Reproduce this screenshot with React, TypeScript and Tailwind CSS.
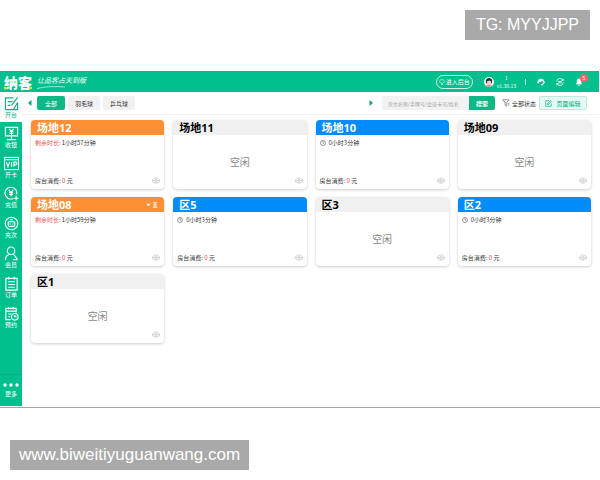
import React from 'react';
import clsx from 'clsx';

type Room = {
  name: string;
  status: 'timing' | 'open' | 'free';
  time?: string;
  tagged?: boolean;
};

const rooms: Room[] = [
  { name: '场地12', status: 'timing', time: '1小时57分钟' },
  { name: '场地11', status: 'free' },
  { name: '场地10', status: 'open', time: '0小时3分钟' },
  { name: '场地09', status: 'free' },
  { name: '场地08', status: 'timing', time: '1小时59分钟', tagged: true },
  { name: '区5', status: 'open', time: '0小时3分钟' },
  { name: '区3', status: 'free' },
  { name: '区2', status: 'open', time: '0小时3分钟' },
  { name: '区1', status: 'free' },
];

const headStyles = {
  timing: 'bg-[#fd8f35] text-white',
  open: 'bg-[#008dfb] text-white',
  free: 'bg-[#f0f0f0] text-black',
};

// Sidebar entries, icons are drawn on a 16x16 grid
const menu = [
  {
    label: '开台',
    icon: <path d="M10 2H1.5v12.5h8M4 6h5M4 10h3M14.5 1.500 8 10M14.5 7v7.500H10l4.500-7.500" />,
  },
  {
    label: '收银',
    icon: <path d="M1.500 1.500h13v9h-13zM8 10.500v3M3 14.500h10M5.500 3 8 5.500 10.500 3M8 5.500V9.500M6 5.800h4M6 7.800h4" />,
  },
  {
    label: '开卡',
    icon: (
      <>
        <rect x="0.500" y="1.500" width="15" height="13" />
        <path d="M.5 4h15M2.500 6.500l1.700 5 1.700-5M8 6.500v5M10.500 11.500v-5h1.800a1.400 1.400 0 0 1 0 3h-1.800" />
      </>
    ),
  },
  {
    label: '充值',
    icon: <path d="M10 13.300A6.300 6.300 0 1 1 13.500 9M5 4l2.500 3L10 4M7.500 7v4M5.500 7h4M5.500 9h4M13 10.500v5M10.500 13h5" />,
  },
  {
    label: '充次',
    icon: (
      <>
        <circle cx="8" cy="8" r="6.700" />
        <rect x="4.500" y="6" width="7" height="5" rx="1.500" />
        <path d="M6.500 8v1M9.500 8v1M6.500 4h3" />
      </>
    ),
  },
  {
    label: '会员',
    icon: (
      <>
        <circle cx="7.500" cy="5" r="4" />
        <path d="M1.500 15c0-3.500 2-5.500 4.500-6.200M10 8.500l4.500 6M9.500 14.500h5" />
      </>
    ),
  },
  {
    label: '订单',
    icon: <path d="M2 2.500h12v12.500H2zM5 .8v3M11 .8v3M4.500 6h7M4.500 9h7M4.500 12h7" />,
  },
  {
    label: '预约',
    icon: (
      <>
        <path d="M7 14.500H2v-12h11v4.500M2 5.500h11M5 1v2.500M10 1v2.500M4.500 8.500h3M4.500 11.500h2" />
        <circle cx="11.500" cy="11.500" r="3.500" />
        <path d="M11.500 9.500v2h2" />
      </>
    ),
  },
];

const Header = () => (
  <header className="flex h-[21px] items-center bg-[#02c08d] pr-4 pl-1 text-white">
    <h1 className="relative text-[14px] leading-[20px] font-black">
      纳客
      <span className="absolute bottom-[3px] left-0 h-[2px] w-[3px] bg-[#f3dc3c]"></span>
      <span className="absolute right-0 bottom-[3px] h-[2px] w-[2px] bg-[#f3dc3c]"></span>
    </h1>
    <div className="ml-[5px] flex flex-col text-[7px] leading-[11px] italic">
      让品客占天到版
      <svg className="h-[3px] w-[30px]" viewBox="0 0 30 3" fill="none" stroke="currentColor" strokeWidth="0.600">
        <path d="M0 2.500C8 .5 18 0 28 1" />
      </svg>
    </div>
    <div className="ml-auto flex items-center">
      <button type="button" className="flex h-[14px] w-[37px] items-center justify-center gap-px rounded-full border border-white/80 text-[6px]">
        <svg className="size-[6px]" viewBox="0 0 12 12" fill="none" stroke="currentColor" strokeWidth="1.200">
          <path d="M3 1.500h6L11.500 5 6 9.500.5 5zM4 11h4" />
        </svg>
        进入后台
      </button>
      <svg className="ml-[11px] size-[10px]" viewBox="0 0 20 20">
        <circle cx="10" cy="10" r="10" fill="#fff" />
        <path d="M3.500 10C3 4.500 6 2 10 2s7 2.500 6.500 8L15 13H5z" fill="#28313a" />
        <path d="M6 8.500c2 0 4-.5 5-1.500 1 1 2 1.500 3 1.500V11c0 2.500-2 4-4 4s-4-1.500-4-4z" fill="#f8d3c4" />
        <path d="M4 17.500c1.500-2 3.500-2.500 6-2.500s4.500.5 6 2.500c-3 3-9 3-12 0" fill="#e88c90" />
      </svg>
      <div className="ml-[3px] text-center text-[5px] leading-[8px]">
        <p>1</p>
        <p>v1.30.13</p>
      </div>
      <span className="ml-[9px] h-[6px] w-px bg-white/80"></span>
      <button type="button" aria-label="客服" className="ml-[11px]">
        <svg className="size-[8px]" viewBox="0 0 16 16">
          <path d="M8 1a6 6 0 0 0-6 5C0 6.500 0 11 2.500 11H4V8c3 0 5-1 6-3 .5 1.500 1.500 2.500 2.500 3-.2 3-2 4.500-4.500 4.500V15c3.500 0 5.500-1.500 6-4 2-.5 2-4.500 0-5A6 6 0 0 0 8 1" fill="#fff" />
        </svg>
      </button>
      <button type="button" aria-label="刷新" className="ml-[11px]">
        <svg className="size-[8px]" viewBox="0 0 16 16" fill="none" stroke="#fff" strokeWidth="1.700">
          <path d="M1.500 7A6.500 6.500 0 0 1 14 5M14.500 9A6.500 6.500 0 0 1 2 11M14.500 1.500V5H11M1.500 14.500V11H5M4.500 7h7M4.500 9.500h7" />
        </svg>
      </button>
      <button type="button" aria-label="消息" className="relative ml-[11px]">
        <svg className="size-[8px]" viewBox="0 0 16 16" fill="#fff">
          <path d="M8 1C5 1 3.500 3.500 3.500 6v4L1 12.500h14L12.500 10V6C12.500 3.500 11 1 8 1M6 13.500h4c0 2.500-4 2.500-4 0" />
        </svg>
        <span className="absolute -top-[4px] -right-[5px] flex size-[8px] items-center justify-center rounded-full bg-[#f0646c] text-[5px] leading-none">5</span>
      </button>
    </div>
  </header>
);

const Sidebar = () => (
  <nav className="flex w-[22px] shrink-0 flex-col bg-[#02c08d] text-white">
    {menu.map((item, index) => (
      <a
        key={item.label}
        href="#"
        className={clsx(
          'flex h-[30px] flex-col items-center justify-center text-[6px] leading-[8px]',
          index === 0 && 'bg-white text-[#0fae84]'
        )}
      >
        <svg
          className="size-[15px]"
          viewBox="0 0 16 16"
          fill="none"
          stroke="currentColor"
          strokeWidth="1.200"
        >
          {item.icon}
        </svg>
        {item.label}
      </a>
    ))}
    <a href="#" className="mt-auto flex h-8 flex-col items-center justify-center gap-[3px] border-t border-[#04b283] text-[6px] leading-[8px]">
      <svg className="h-[4px] w-[16px]" viewBox="0 0 16 4" fill="currentColor">
        <circle cx="2" cy="2" r="1.700" />
        <circle cx="8" cy="2" r="1.700" />
        <circle cx="14" cy="2" r="1.700" />
      </svg>
      更多
    </a>
  </nav>
);

const Toolbar = () => (
  <div className="flex h-[23px] items-center border-b border-[#f0f3f3] pr-3 pl-[5px] text-[6px] text-[#333]">
    <button type="button" aria-label="向左" className="mr-[5px]">
      <svg className="h-[6px] w-[5px]" viewBox="0 0 5 6" fill="#0aa67c"><path d="M4.500 0v6L1 3z" /></svg>
    </button>
    <div className="flex gap-[3px]">
      <button type="button" className="h-[14px] rounded-[2px] bg-[#0bb886] px-2 text-white">全部</button>
      <button type="button" className="h-[14px] rounded-[2px] bg-[#f1f1f1] px-[7px]">羽毛球</button>
      <button type="button" className="h-[14px] rounded-[2px] bg-[#f1f1f1] px-[7px]">乒乓球</button>
    </div>
    <button type="button" aria-label="向右" className="mr-2 ml-auto">
      <svg className="h-[6px] w-[5px]" viewBox="0 0 5 6" fill="#0aa67c"><path d="M.5 0v6L4 3z" /></svg>
    </button>
    <input
      type="text"
      aria-label="搜索房台"
      placeholder="房台名称/手牌号/会员卡号/姓名"
      className="h-[14px] w-[87px] rounded-l-[2px] bg-[#f2f2f2] pl-[6px] text-[5px] placeholder:text-[#a0a0a0]"
    />
    <button type="button" className="h-[14px] w-[26px] rounded-r-[2px] bg-[#0bb886] font-bold text-white">搜索</button>
    <button type="button" className="ml-[7px] flex items-center gap-[2px]">
      <svg className="size-[8px]" viewBox="0 0 16 16" fill="none" stroke="#666" strokeWidth="1.300">
        <path d="M1 1.500h13L9.500 7v7.500L6 12V7zM4.500 4.500 7 7M12 9.500h3M12 12h3" />
      </svg>
      全部状态
    </button>
    <button type="button" className="ml-[3px] flex h-[14px] w-[48px] items-center justify-center gap-[4px] rounded-[2px] border border-[#bcebdd] bg-[#e6f9f4] text-[#0aa67c]">
      <svg className="size-[7px]" viewBox="0 0 14 14" fill="none" stroke="currentColor" strokeWidth="1.300">
        <path d="M8 1.500H1.500v11h11V7M5 9l.5-2.500L11.500 1 13 2.500 7.500 8.500z" />
      </svg>
      页面编辑
    </button>
  </div>
);

const RoomCard = ({ room }: { room: Room }) => (
  <article className="flex h-[69px] flex-col overflow-hidden rounded-[4px] bg-white text-[6px] leading-[8px] text-[#333] shadow-[0_1px_3px_rgba(0,0,0,0.2)]">
    <div className={clsx('flex h-[15px] shrink-0 items-center justify-between px-[6px]', headStyles[room.status])}>
      <h2 className="font-['Open_Sans','Noto_Sans_CJK_SC',sans-serif] text-[11px] leading-[15px] font-bold">{room.name}</h2>
      {room.tagged && (
        <svg className="h-[6px] w-[12px]" viewBox="0 0 24 12" fill="none" stroke="currentColor">
          <path d="M1 2l3 7 6-6-5 1z" fill="currentColor" stroke="none" />
          <path d="M14 1.500h8M18 1.500v4M15 5.500h6M17 5.500l-1 5M20 5.500v5M13.500 10.500h9" strokeWidth="1.600" />
        </svg>
      )}
    </div>
    <div className="relative flex flex-1 flex-col justify-between px-[4px] py-[4px]">
      {room.status === 'free' ? (
        <p className="m-auto text-[10px] leading-[14px] text-[#888]">空闲</p>
      ) : (
        <>
          <p className="flex items-center">
            {room.status === 'timing' ? (
              <span className="mr-px text-[#f0565c]">剩余时长:</span>
            ) : (
              <svg className="mr-[3px] size-[6px]" viewBox="0 0 12 12" fill="none" stroke="currentColor">
                <circle cx="6" cy="6" r="5" />
                <path d="M6 2.500V6l2.500 1.500" />
              </svg>
            )}
            {room.time}
          </p>
          <p>
            房台消费: <span className="text-[#e0404c]">0</span> 元
          </p>
        </>
      )}
      <svg className="absolute right-[4px] bottom-[5px] h-[7px] w-[8px]" viewBox="0 0 16 14" fill="none" stroke="#b5b5b5" strokeWidth="1.200">
        <path d="M1 7.500C1 4.500 4 2 8 2s7 2.500 7 5.500c0 3-3 4.500-7 4.500s-7-1.500-7-4.500M1 7.500h14M5 7.500C5 6 6 5 8 5s3 1 3 2.500M6 10h4" />
      </svg>
    </div>
  </article>
);

const App = () => {
  return (
    <div className="flex min-h-screen flex-col bg-white font-['Noto_Sans_CJK_SC',sans-serif]">
      <div className="flex justify-end px-[10px] pt-[10px] pb-[31px]">
        <p className="bg-[#a9a9a9] px-[11px] font-['Liberation_Sans',sans-serif] text-[16px] leading-[30px] text-white">TG: MYYJJPP</p>
      </div>

      <div className="flex flex-1 flex-col border-b border-[#a5a5a5] pr-px pb-px">
        <Header />
        <div className="flex flex-1">
          <Sidebar />
          <main className="min-w-0 flex-1">
            <Toolbar />
            <div className="grid grid-cols-4 gap-x-[9px] gap-y-2 pt-[5px] pr-2 pb-2 pl-[9px]">
              {rooms.map((room) => (
                <RoomCard key={room.name} room={room} />
              ))}
            </div>
          </main>
        </div>
      </div>

      <div className="flex px-[10px] pt-8 pb-[10px]">
        <p className="bg-[#a9a9a9] px-[9px] font-['Liberation_Sans',sans-serif] text-[17px] leading-[30px] text-white">www.biweitiyuguanwang.com</p>
      </div>
    </div>
  );
};

export default App;
